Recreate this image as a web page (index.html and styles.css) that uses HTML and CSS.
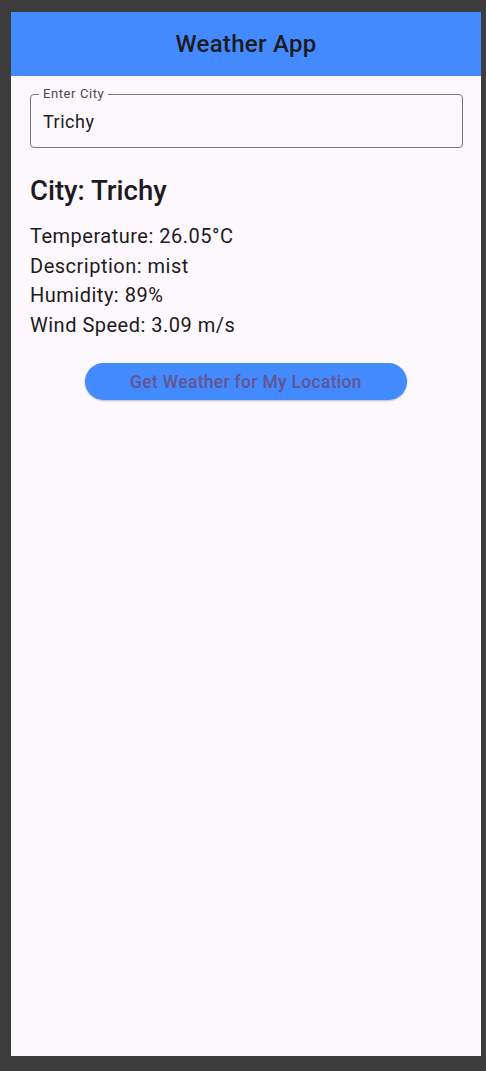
FILE: index.html
```html
<!DOCTYPE html>
<html>
<head>
<meta charset="utf-8">
<link rel="stylesheet" href="styles.css">
</head>
<body>
<div class="app">
  <header class="appbar"><h1 class="appbar-title">Weather App</h1></header>
  <main class="content">
    <fieldset class="field">
      <legend class="field-label">Enter City</legend>
      <div class="field-value">Trichy</div>
    </fieldset>
    <h2 class="city">City: Trichy</h2>
    <div class="details">
      <p class="detail">Temperature: 26.05°C</p>
      <p class="detail">Description: mist</p>
      <p class="detail">Humidity: 89%</p>
      <p class="detail">Wind Speed: 3.09 m/s</p>
    </div>
    <div class="actions">
      <button class="btn">Get Weather for My Location</button>
    </div>
  </main>
</div>
</body>
</html>
```
FILE: styles.css
```css
html, body {
  margin: 0;
  padding: 0;
  background: #3c3c3c;
}
body {
  padding: 12px 5px 15px 11px;
  font-family: Roboto, "Noto Sans", sans-serif;
  color: #1d1b20;
}
.app {
  width: 470px;
  height: 1044px;
  background: #fdf7fe;
  display: flex;
  flex-direction: column;
}
.appbar {
  height: 64px;
  background: #448aff;
  display: flex;
  align-items: center;
  justify-content: center;
}
.appbar-title {
  margin: 0;
  font-size: 24px;
  font-weight: 500;
  letter-spacing: 0.3px;
  color: #1d1b20;
}
.content {
  padding: 10px 18px 0 19px;
  display: flex;
  flex-direction: column;
}
.field {
  margin: 0;
  padding: 0 0 0 12px;
  height: 62px;
  box-sizing: border-box;
  border: 1px solid #79747e;
  border-radius: 4px;
}
.field-label {
  font-size: 13px;
  color: #49454f;
  padding: 0 4px;
  margin-left: -4px;
  line-height: 16px;
  letter-spacing: 0.6px;
}
.field-value {
  font-size: 18px;
  line-height: 24px;
  padding-top: 8px;
  letter-spacing: 0.5px;
  color: #1d1b20;
}
.city {
  margin: 26px 0 0 0;
  font-size: 27.5px;
  font-weight: 500;
  line-height: 34px;
}
.details {
  margin-top: 14px;
  display: flex;
  flex-direction: column;
}
.detail {
  margin: 0;
  font-size: 20px;
  line-height: 29.5px;
  letter-spacing: 0.5px;
}
.actions {
  display: flex;
  justify-content: center;
  margin-top: 23px;
  padding-right: 1px;
}
.btn {
  width: 322px;
  height: 37px;
  border: none;
  border-radius: 19px;
  background: #448aff;
  color: #65558f;
  font-family: Roboto, sans-serif;
  font-size: 17.5px;
  font-weight: 500;
  letter-spacing: 0.3px;
  box-shadow: 0 1px 2px rgba(0,0,0,0.25);
  padding: 0;
}
```
